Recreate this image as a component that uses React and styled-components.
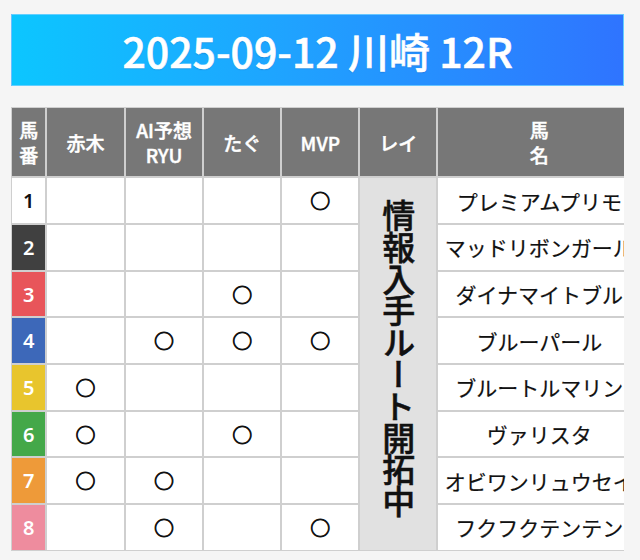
import React from "react";
import styled, { createGlobalStyle } from "styled-components";

const Global = createGlobalStyle`
  html, body { margin: 0; padding: 0; }
  body {
    background: #f5f5f5;
    font-family: "Noto Sans CJK JP", "Noto Sans", sans-serif;
    width: 640px;
    height: 560px;
    overflow: hidden;
  }
`;

const Page = styled.div`
  display: flex;
  flex-direction: column;
  gap: 21.6px;
  padding: 14.3px 16px 0 11.3px;
`;

const Banner = styled.header`
  box-sizing: border-box;
  width: 612.7px;
  height: 71.4px;
  display: flex;
  align-items: center;
  justify-content: center;
  background: linear-gradient(90deg, #0cc6ff 0%, #1fa3ff 45%, #2f74ff 100%);
  border: 1px solid rgba(120, 210, 255, 0.8);
  color: #fff;
  font-family: "Noto Sans CJK JP", "Noto Sans", sans-serif;
  font-size: 41px;
  font-weight: 500;
  -webkit-text-stroke: 0.6px #fff;
  text-shadow: 0 1px 1px rgba(0, 40, 120, 0.25);
`;

const Scroller = styled.div`
  width: 612.7px;
  overflow: hidden;
`;

const Table = styled.table`
  table-layout: fixed;
  width: 630px;
  border-collapse: separate;
  border-spacing: 0;
`;

const Col = styled.col`
  width: ${(p) => p.$w}px;
`;

const Th = styled.th`
  box-sizing: border-box;
  height: 70px;
  padding: 0;
  border: 1px solid #cfcfcf;
  background: #777777;
  color: #fff;
  font-size: 19px;
  font-weight: 500;
  -webkit-text-stroke: 0.45px #fff;
  line-height: 25px;
  text-align: center;
  vertical-align: middle;
`;

const Tr = styled.tr`
  height: 46.7px;
`;

const NumCell = styled.td`
  box-sizing: border-box;
  border: 1px solid #cfcfcf;
  background: ${(p) => p.$bg};
  color: ${(p) => p.$fg};
  font-family: "Noto Sans", "Noto Sans CJK JP", sans-serif;
  font-size: 20px;
  font-weight: 600;
  text-align: center;
  vertical-align: middle;
  padding: 0;
`;

const MarkCell = styled.td`
  box-sizing: border-box;
  border: 1px solid #cfcfcf;
  background: #fff;
  color: #111;
  font-size: 20px;
  font-weight: 700;
  -webkit-text-stroke: 0.8px #111;
  text-align: center;
  vertical-align: middle;
  padding: 0;
`;

const ReiCell = styled.td`
  box-sizing: border-box;
  border: 1px solid #cfcfcf;
  background: #e1e1e1;
  text-align: center;
  vertical-align: middle;
  padding: 0 0 8px;
`;

const Vertical = styled.span`
  display: inline-block;
  writing-mode: vertical-rl;
  text-orientation: upright;
  font-size: 33px;
  font-weight: 500;
  letter-spacing: -1.2px;
  -webkit-text-stroke: 0.5px #111;
  line-height: 1;
  color: #111;
`;

const NameCell = styled.td`
  box-sizing: border-box;
  border: 1px solid #cfcfcf;
  background: #fff;
  color: #111;
  font-size: 21px;
  font-weight: 400;
  -webkit-text-stroke: 0.2px #111;
  text-align: center;
  vertical-align: middle;
  white-space: nowrap;
  overflow: hidden;
  padding: 0;
`;

const horses = [
  { n: 1, bg: "#ffffff", fg: "#111", name: "プレミアムプリモ", marks: [0, 0, 0, 1] },
  { n: 2, bg: "#404040", fg: "#fff", name: "マッドリボンガール", marks: [0, 0, 0, 0] },
  { n: 3, bg: "#e8555a", fg: "#fff", name: "ダイナマイトブル", marks: [0, 0, 1, 0] },
  { n: 4, bg: "#3d68b9", fg: "#fff", name: "ブルーパール", marks: [0, 1, 1, 1] },
  { n: 5, bg: "#e8c52d", fg: "#fff", name: "ブルートルマリン", marks: [1, 0, 0, 0] },
  { n: 6, bg: "#44a849", fg: "#fff", name: "ヴァリスタ", marks: [1, 0, 1, 0] },
  { n: 7, bg: "#ee9a39", fg: "#fff", name: "オビワンリュウセイ", marks: [1, 1, 0, 0] },
  { n: 8, bg: "#ee8c9e", fg: "#fff", name: "フクフクテンテン", marks: [0, 1, 0, 1] },
];

export default function App() {
  return (
    <>
      <Global />
      <Page>
        <Banner>2025-09-12 川崎 12R</Banner>
        <Scroller>
          <Table>
            <colgroup>
              <Col $w={35} />
              <Col $w={78.5} />
              <Col $w={78.5} />
              <Col $w={78} />
              <Col $w={78} />
              <Col $w={78} />
              <Col $w={204} />
            </colgroup>
            <thead>
              <tr>
                <Th>馬<br />番</Th>
                <Th>赤木</Th>
                <Th>AI予想<br />RYU</Th>
                <Th>たぐ</Th>
                <Th>MVP</Th>
                <Th>レイ</Th>
                <Th>馬<br />名</Th>
              </tr>
            </thead>
            <tbody>
              {horses.map((h, i) => (
                <Tr key={h.n}>
                  <NumCell $bg={h.bg} $fg={h.fg}>{h.n}</NumCell>
                  {h.marks.map((m, j) => (
                    <MarkCell key={j}>{m ? "○" : ""}</MarkCell>
                  ))}
                  {i === 0 && (
                    <ReiCell rowSpan={8}>
                      <Vertical>情報入手ルート開拓中</Vertical>
                    </ReiCell>
                  )}
                  <NameCell>{h.name}</NameCell>
                </Tr>
              ))}
            </tbody>
          </Table>
        </Scroller>
      </Page>
    </>
  );
}
